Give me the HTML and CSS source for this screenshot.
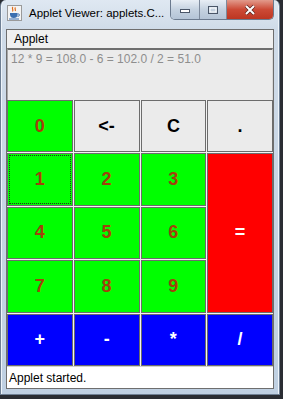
FILE: index.html
```html
<!DOCTYPE html>
<html lang="en">
<head>
	<meta charset="UTF-8">
	<title>Applet Viewer</title>
	<link rel="stylesheet" href="styles.css">
</head>
<body>
	<div class="window">
		<div class="titlebar">
			<span class="app-icon">
				<svg width="15" height="16" viewBox="0 0 15 16">
					<rect x="0.5" y="0.5" width="14" height="15" fill="#f4f4f4" stroke="#9a9a9a"/>
					<path d="M6 2c-2 1.5 1 2.5-0.5 4.5M8.5 2.5c-1.5 1.2 0.8 2-0.4 3.5" stroke="#e06c1a" stroke-width="1.2" fill="none"/>
					<path d="M3 8h7.5v1.5c0 2.5-1.5 3.5-3.7 3.5S3 12 3 9.5z" fill="#3c6fb0"/>
					<path d="M10.5 9h1.2c1 0 1 2-0.3 2.2h-1" stroke="#3c6fb0" stroke-width="1" fill="none"/>
					<path d="M2 14h10" stroke="#3c6fb0" stroke-width="1"/>
				</svg>
			</span>
			<span class="title">Applet Viewer: applets.C...</span>
			<div class="caption">
				<span class="cap-btn min">
					<svg width="12" height="8" viewBox="0 0 12 8"><rect x="1.5" y="3.5" width="9" height="3" fill="#fff" stroke="#4a5668"/></svg>
				</span>
				<span class="cap-btn max">
					<svg width="12" height="10" viewBox="0 0 12 10"><rect x="1.5" y="1.5" width="9" height="7" fill="none" stroke="#4a5668" stroke-width="1"/><rect x="3" y="3" width="6" height="4" fill="none" stroke="#fff" stroke-width="1"/></svg>
				</span>
				<span class="cap-btn close">
					<svg width="14" height="12" viewBox="0 0 14 12"><path d="M3 2l8 8M11 2l-8 8" stroke="#5a2520" stroke-width="3.4"/><path d="M3 2l8 8M11 2l-8 8" stroke="#fff" stroke-width="2"/></svg>
				</span>
			</div>
		</div>
		<div class="content">
			<div class="menu">Applet</div>
			<div class="display">12 * 9 = 108.0 - 6 = 102.0 / 2 = 51.0</div>
			<div class="keys">
				<span class="key green">0</span>
				<span class="key gray">&lt;-</span>
				<span class="key gray">C</span>
				<span class="key gray">.</span>
				<span class="key green focus">1</span>
				<span class="key green">2</span>
				<span class="key green">3</span>
				<span class="key red equals">=</span>
				<span class="key green">4</span>
				<span class="key green">5</span>
				<span class="key green">6</span>
				<span class="key green">7</span>
				<span class="key green">8</span>
				<span class="key green">9</span>
				<span class="key blue">+</span>
				<span class="key blue">-</span>
				<span class="key blue">*</span>
				<span class="key blue">/</span>
			</div>
			<div class="status">Applet started.</div>
		</div>
	</div>
</body>
</html>
```

FILE: styles.css
```css
* {
	margin: 0;
	padding: 0;
	box-sizing: border-box;
}
body {
	width: 283px;
	height: 399px;
	background-color: #2a2d33;
	font-family: "Liberation Sans", Arial, sans-serif;
	overflow: hidden;
}
.window {
	width: 280px;
	height: 395px;
	padding: 0 5px 6px 5px;
	border-radius: 6px 6px 0 0;
	border: 1px solid #6f8094;
	border-top: none;
	background: linear-gradient(to bottom, #dfe8f2 0, #cfdbe8 30px, #bfd0e2 100%);
	box-shadow: inset 1px 0 #eef4fa, inset -1px 0 #eef4fa;
}
.titlebar {
	height: 29px;
	display: flex;
	align-items: flex-start;
}
.app-icon {
	flex-shrink: 0;
	margin: 5px 0 0 1px;
	width: 15px;
	height: 16px;
}
.app-icon svg {
	display: block;
}
.title {
	margin: 7px 0 0 7px;
	font-family: "Liberation Sans", Arial, sans-serif;
	font-size: 11.5px;
	color: #000;
	white-space: nowrap;
}
.caption {
	flex-shrink: 0;
	margin-left: auto;
	display: flex;
	height: 20px;
	border: 1px solid #6b7a8e;
	border-top: none;
	border-radius: 0 0 5px 5px;
	overflow: hidden;
}
.cap-btn {
	flex-shrink: 0;
	display: flex;
	align-items: center;
	justify-content: center;
}
.cap-btn svg {
	display: block;
}
.min {
	width: 29px;
	background: linear-gradient(to bottom, #e8eef5, #c5d2e0 50%, #b4c4d6);
	border-right: 1px solid #7d8a9c;
}
.max {
	width: 27px;
	background: linear-gradient(to bottom, #e8eef5, #c5d2e0 50%, #b4c4d6);
	border-right: 1px solid #7d8a9c;
}
.close {
	width: 46px;
	background: linear-gradient(to bottom, #e29b8c, #cc4a36 50%, #bd3622);
}
.content {
	height: 360px;
	border: 1px solid #6e6e6e;
	background-color: #f0f0f0;
	display: flex;
	flex-direction: column;
}
.menu {
	height: 18px;
	padding: 2px 0 0 7px;
	font-size: 12px;
	color: #000;
	background-color: #f0f0f0;
}
.display {
	height: 52px;
	padding: 2px 3px;
	border-top: 2px solid #6f6f6f;
	border-left: 1px solid #a8a8a8;
	border-right: 1px solid #d8d8d8;
	background-color: #ebebeb;
	font-size: 12px;
	color: #8e8e8e;
	white-space: nowrap;
}
.keys {
	height: 266px;
	display: grid;
	grid-template-columns: repeat(4, 1fr);
	grid-template-rows: repeat(5, 1fr);
	gap: 1px;
	background-color: #f2f2f2;
}
.key {
	display: flex;
	align-items: center;
	justify-content: center;
	border: 1px solid #6c6c6c;
	font-size: 18px;
	font-weight: bold;
}
.green {
	background-color: #00ff00;
	color: #a2400c;
}
.gray {
	background-color: #ebebeb;
	color: #000;
}
.red {
	background-color: #ff0000;
	color: #fff;
}
.blue {
	background-color: #0000ff;
	color: #fff;
}
.equals {
	grid-column: 4;
	grid-row: 2 / span 3;
}
.focus {
	outline: 1px dotted #2a2a2a;
	outline-offset: -3px;
}
.status {
	flex: 1;
	padding: 4px 0 0 2px;
	background-color: #fff;
	border-top: 1px solid #d0d0d0;
	font-size: 12px;
	color: #000;
}
```
